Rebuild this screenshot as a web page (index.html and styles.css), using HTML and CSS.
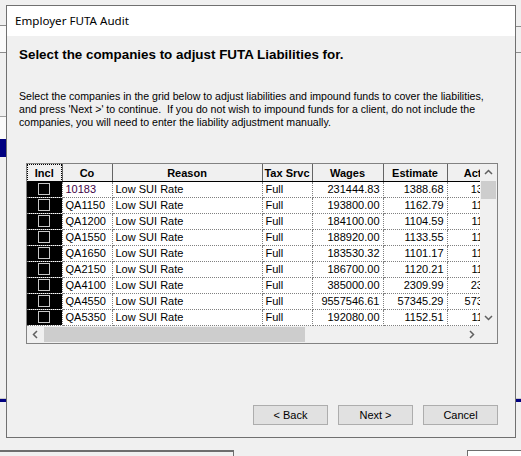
FILE: index.html
```html
<!DOCTYPE html>
<html lang="en">
<head>
    <meta charset="UTF-8">
    <meta name="viewport" content="width=device-width, initial-scale=1.0">
    <title>Employer FUTA Audit</title>
    <link rel="stylesheet" href="styles.css">
</head>
<body>
    <div class="desk">
        <!-- bits of the window behind the dialog -->
        <div class="back back-top-left"></div>
        <div class="back back-top-right"></div>
        <div class="back back-mid-left"></div>
        <div class="back back-navy-left"></div>
        <div class="back back-low-left"></div>
        <div class="back back-low-right"></div>
        <div class="back back-foot-left"></div>
        <div class="back back-foot-right"></div>

        <div class="dialog">
            <div class="titlebar">Employer FUTA Audit</div>

            <div class="content">
                <h1>Select the companies to adjust FUTA Liabilities for.</h1>
                <p class="intro">
                    Select the companies in the grid below to adjust liabilities and impound funds to cover the liabilities,<br>
                    and press 'Next &gt;' to continue.&nbsp; If you do not wish to impound funds for a client, do not include the<br>
                    companies, you will need to enter the liability adjustment manually.
                </p>

                <div class="grid">
                    <div class="grid-top">
                        <div class="viewport">
                            <table>
                                <colgroup>
                                    <col class="c-incl">
                                    <col class="c-co">
                                    <col class="c-reason">
                                    <col class="c-tax">
                                    <col class="c-wages">
                                    <col class="c-est">
                                    <col class="c-act">
                                </colgroup>
                                <thead>
                                    <tr>
                                        <th class="focus">Incl</th>
                                        <th>Co</th>
                                        <th>Reason</th>
                                        <th>Tax Srvc</th>
                                        <th>Wages</th>
                                        <th>Estimate</th>
                                        <th>Actual</th>
                                    </tr>
                                </thead>
                                <tbody id="rows"></tbody>
                            </table>
                        </div>
                        <div class="vscroll">
                            <div class="arrow">
                                <svg width="17" height="17" viewBox="0 0 17 17"><polyline points="5,10 8.5,6.5 12,10" fill="none" stroke="#606060" stroke-width="1.5"/></svg>
                            </div>
                            <div class="vthumb"></div>
                            <div class="track"></div>
                            <div class="arrow">
                                <svg width="17" height="17" viewBox="0 0 17 17"><polyline points="5,7 8.5,10.5 12,7" fill="none" stroke="#606060" stroke-width="1.5"/></svg>
                            </div>
                        </div>
                    </div>
                    <div class="hscroll">
                        <div class="arrow">
                            <svg width="17" height="17" viewBox="0 0 17 17"><polyline points="10,5 6.5,8.5 10,12" fill="none" stroke="#606060" stroke-width="1.5"/></svg>
                        </div>
                        <div class="hthumb"></div>
                        <div class="track"></div>
                        <div class="arrow">
                            <svg width="17" height="17" viewBox="0 0 17 17"><polyline points="7,5 10.5,8.5 7,12" fill="none" stroke="#606060" stroke-width="1.5"/></svg>
                        </div>
                        <div class="corner"></div>
                    </div>
                </div>
            </div>

            <div class="buttons">
                <button>&lt; Back</button>
                <button>Next &gt;</button>
                <button>Cancel</button>
            </div>
        </div>
    </div>

    <script>
        const companies = [
            ['10183', 'Low SUI Rate', 'Full', '231444.83', '1388.68', '1388.68'],
            ['QA1150', 'Low SUI Rate', 'Full', '193800.00', '1162.79', '1162.79'],
            ['QA1200', 'Low SUI Rate', 'Full', '184100.00', '1104.59', '1104.59'],
            ['QA1550', 'Low SUI Rate', 'Full', '188920.00', '1133.55', '1133.55'],
            ['QA1650', 'Low SUI Rate', 'Full', '183530.32', '1101.17', '1101.17'],
            ['QA2150', 'Low SUI Rate', 'Full', '186700.00', '1120.21', '1120.21'],
            ['QA4100', 'Low SUI Rate', 'Full', '385000.00', '2309.99', '2309.99'],
            ['QA4550', 'Low SUI Rate', 'Full', '9557546.61', '57345.29', '57345.29'],
            ['QA5350', 'Low SUI Rate', 'Full', '192080.00', '1152.51', '1152.51']
        ];

        const tbody = document.getElementById('rows');
        companies.forEach(function(c, i) {
            const tr = document.createElement('tr');
            tr.innerHTML =
                '<td class="incl"><span class="check"></span></td>' +
                '<td class="' + (i === 0 ? 'current' : '') + '">' + c[0] + '</td>' +
                '<td>' + c[1] + '</td>' +
                '<td>' + c[2] + '</td>' +
                '<td class="num">' + c[3] + '</td>' +
                '<td class="num">' + c[4] + '</td>' +
                '<td class="num">' + c[5] + '</td>';
            tbody.appendChild(tr);
        });
    </script>
</body>
</html>
```

FILE: styles.css
```css
body {
    margin: 0;
    background-color: #f0f0f0;
    font-family: "Liberation Sans", Arial, sans-serif;
    font-size: 11px;
    color: #000;
}
.desk {
    position: relative;
    width: 521px;
    height: 456px;
    overflow: hidden;
}

/* window behind */
.back {
    position: absolute;
}
.back-top-left {
    left: 0;
    top: 25px;
    width: 6px;
    height: 26px;
    background-color: #fafafa;
    border-top: 1px solid #8c8c8c;
    border-bottom: 1px solid #8c8c8c;
}
.back-top-right {
    left: 516px;
    top: 26px;
    width: 6px;
    height: 25px;
    border-top: 1px solid #8c8c8c;
    border-bottom: 1px solid #8c8c8c;
}
.back-mid-left {
    left: 0;
    top: 116px;
    width: 6px;
    height: 22px;
    background-color: #fafafa;
    border-top: 1px solid #a0a0a0;
}
.back-navy-left {
    left: 0;
    top: 139px;
    width: 6px;
    height: 18px;
    background-color: #000080;
}
.back-low-left,
.back-low-right {
    top: 398px;
    height: 1px;
    background-color: #c8c8c8;
    border-bottom: 3px solid #000080;
}
.back-low-left {
    left: 0;
    width: 6px;
}
.back-low-right {
    left: 516px;
    width: 6px;
}
.back-foot-left {
    left: 0;
    top: 450px;
    width: 233px;
    height: 10px;
    border-top: 2px solid #6e6e6e;
    border-right: 1px solid #6e6e6e;
}
.back-foot-right {
    left: 467px;
    top: 450px;
    width: 60px;
    height: 10px;
    background-color: #fff;
    border-top: 1px solid #6e6e6e;
    border-left: 1px solid #6e6e6e;
}

/* dialog */
.dialog {
    position: absolute;
    left: 6px;
    top: 5px;
    width: 508px;
    height: 431px;
    border: 1px solid #707070;
    background-color: #f0f0f0;
    display: flex;
    flex-direction: column;
}
.titlebar {
    height: 30px;
    line-height: 30px;
    padding-left: 8px;
    background-color: #fff;
    font-family: "Noto Sans", sans-serif;
    font-size: 11.6px;
}
.content {
    padding: 11px 12px 0 12px;
}
h1 {
    margin: 0;
    font-size: 13.4px;
    line-height: 16px;
    font-weight: bold;
}
.intro {
    margin: 27px 0 0 0;
    font-size: 10.6px;
    line-height: 13px;
}

/* grid */
.grid {
    margin: 34px 0 0 7px;
    width: 470px;
    border: 1px solid #828282;
    background-color: #fff;
}
.grid-top {
    display: flex;
}
.viewport {
    width: 453px;
    height: 162px;
    overflow: hidden;
}
table {
    border-collapse: collapse;
    table-layout: fixed;
    width: 487px;
}
.c-incl { width: 35px; }
.c-co { width: 50px; }
.c-reason { width: 150px; }
.c-tax { width: 50px; }
.c-wages { width: 71px; }
.c-est { width: 64px; }
.c-act { width: 67px; }
th {
    height: 17px;
    padding: 0;
    background-color: #f0f0f0;
    border-right: 1px solid #646464;
    border-bottom: 1px solid #000;
    font-weight: bold;
    text-align: center;
    white-space: nowrap;
    overflow: hidden;
}
th.focus {
    outline: 1px dotted #000;
    outline-offset: -1px;
}
td {
    height: 15px;
    padding: 0 3px;
    border-right: 1px dotted #808080;
    border-bottom: 1px dotted #808080;
    white-space: nowrap;
    overflow: hidden;
    line-height: 15px;
}
td.num {
    text-align: right;
}
td.current {
    color: #3c0046;
}
td.incl {
    background-color: #000;
    text-align: center;
    padding: 0;
}
.check {
    display: inline-block;
    width: 10px;
    height: 10px;
    border: 1px solid #c8c8c8;
    vertical-align: middle;
    margin-top: -2px;
}

/* scrollbars */
.vscroll {
    width: 17px;
    height: 162px;
    display: flex;
    flex-direction: column;
    background-color: #f0f0f0;
}
.arrow {
    width: 17px;
    height: 17px;
    flex: none;
}
.arrow svg {
    display: block;
}
.vthumb {
    height: 18px;
    margin: 0 1px;
    background-color: #cdcdcd;
}
.track {
    flex: 1;
}
.hscroll {
    display: flex;
    height: 17px;
    background-color: #f0f0f0;
}
.hthumb {
    width: 261px;
    margin: 1px 0;
    background-color: #cdcdcd;
}
.corner {
    width: 17px;
    background-color: #f0f0f0;
}

/* buttons */
.buttons {
    margin-top: auto;
    display: flex;
    justify-content: flex-end;
    gap: 10px;
    padding: 0 17px 12px 0;
}
button {
    width: 75px;
    height: 20px;
    padding: 0;
    background-color: #e1e1e1;
    border: 1px solid #adadad;
    font-family: "Liberation Sans", Arial, sans-serif;
    font-size: 11px;
    color: #000;
}
```
